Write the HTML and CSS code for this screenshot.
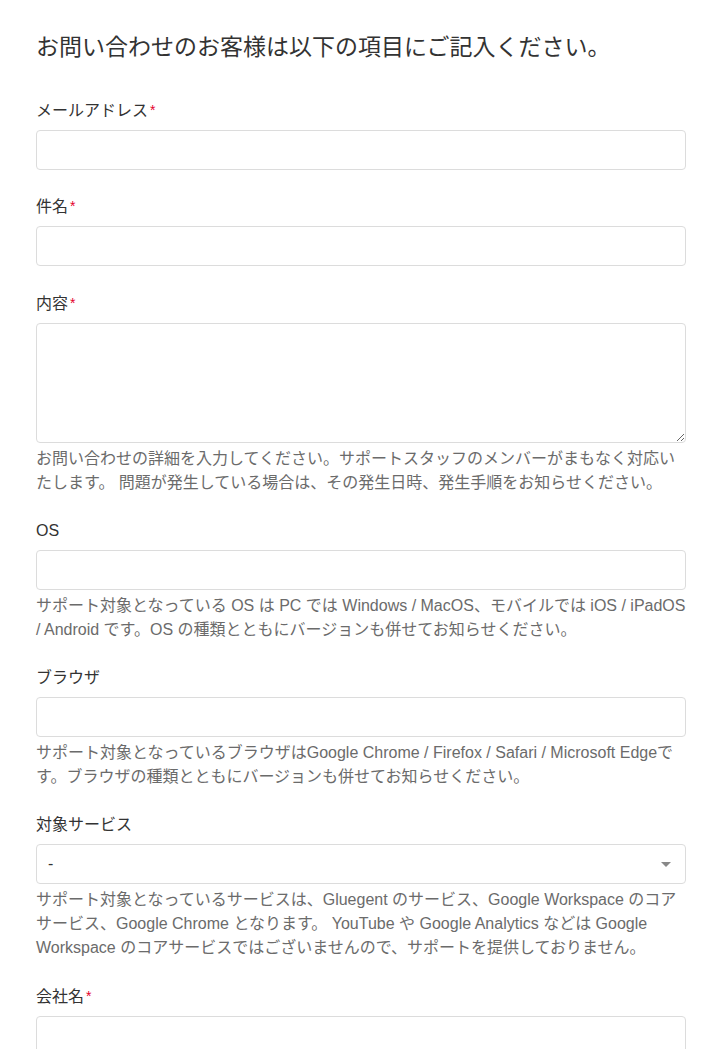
FILE: index.html
```html
<!DOCTYPE html>
<html lang="ja">
<head>
<meta charset="utf-8">
<title>お問い合わせ</title>
<link rel="stylesheet" href="styles.css">
</head>
<body>
<div class="page">
  <h1 class="title">お問い合わせのお客様は以下の項目にご記入ください。</h1>
  <form class="form">
    <div class="group">
      <label class="label">メールアドレス<span class="req">*</span></label>
      <input class="field" type="text">
    </div>
    <div class="group group-wide">
      <label class="label">件名<span class="req">*</span></label>
      <input class="field" type="text">
    </div>
    <div class="group">
      <label class="label">内容<span class="req">*</span></label>
      <textarea class="field area"></textarea>
      <p class="help">お問い合わせの詳細を入力してください。サポートスタッフのメンバーがまもなく対応いたします。 問題が発生している場合は、その発生日時、発生手順をお知らせください。</p>
    </div>
    <div class="group">
      <label class="label">OS</label>
      <input class="field" type="text">
      <p class="help">サポート対象となっている OS は PC では Windows / MacOS、モバイルでは iOS / iPadOS / Android です。OS の種類とともにバージョンも併せてお知らせください。</p>
    </div>
    <div class="group">
      <label class="label">ブラウザ</label>
      <input class="field" type="text">
      <p class="help">サポート対象となっているブラウザはGoogle Chrome / Firefox / Safari / Microsoft Edgeです。ブラウザの種類とともにバージョンも併せてお知らせください。</p>
    </div>
    <div class="group">
      <label class="label">対象サービス</label>
      <div class="select">
        <span class="select-value">-</span>
        <span class="caret"></span>
      </div>
      <p class="help">サポート対象となっているサービスは、Gluegent のサービス、Google Workspace のコアサービス、Google Chrome となります。 YouTube や Google Analytics などは Google Workspace のコアサービスではございませんので、サポートを提供しておりません。</p>
    </div>
    <div class="group">
      <label class="label">会社名<span class="req">*</span></label>
      <input class="field" type="text">
    </div>
  </form>
</div>
</body>
</html>
```
FILE: styles.css
```css
html, body {
  margin: 0;
  padding: 0;
  background: #fff;
}
body {
  font-family: "Liberation Sans", "Noto Sans CJK JP", sans-serif;
  color: #333;
}
.page {
  width: 650px;
  margin-left: 36px;
  padding-top: 30px;
}
.title {
  margin: 0 0 34px 0;
  font-size: 23px;
  line-height: 34px;
  font-weight: normal;
  color: #333;
}
.form {
  display: flex;
  flex-direction: column;
  gap: 24px;
}
.group {
  display: flex;
  flex-direction: column;
}
.group-wide {
  margin-bottom: 1px;
}
.label {
  font-size: 16px;
  line-height: 24px;
  margin-bottom: 7px;
  color: #333;
}
.req {
  color: #e4002b;
  font-size: 14px;
  margin-left: 2px;
  vertical-align: 1px;
}
.field {
  box-sizing: border-box;
  width: 650px;
  height: 40px;
  margin: 0;
  border: 1px solid #dcdcdc;
  border-radius: 4px;
  background: #fff;
  font: inherit;
  padding: 0 12px;
  outline: none;
}
.area {
  height: 120px;
  resize: vertical;
  display: block;
  padding: 8px 12px;
}
.help {
  margin: 4px 0 0 0;
  font-size: 16px;
  line-height: 24px;
  color: #6b6b6b;
}
.select {
  box-sizing: border-box;
  width: 650px;
  height: 40px;
  border: 1px solid #dcdcdc;
  border-radius: 4px;
  display: flex;
  align-items: center;
  justify-content: space-between;
  padding: 0 14px 0 11px;
}
.select-value {
  font-size: 16px;
  color: #333;
}
.caret {
  width: 0;
  height: 0;
  border-left: 5px solid transparent;
  border-right: 5px solid transparent;
  border-top: 5px solid #888;
}
```
